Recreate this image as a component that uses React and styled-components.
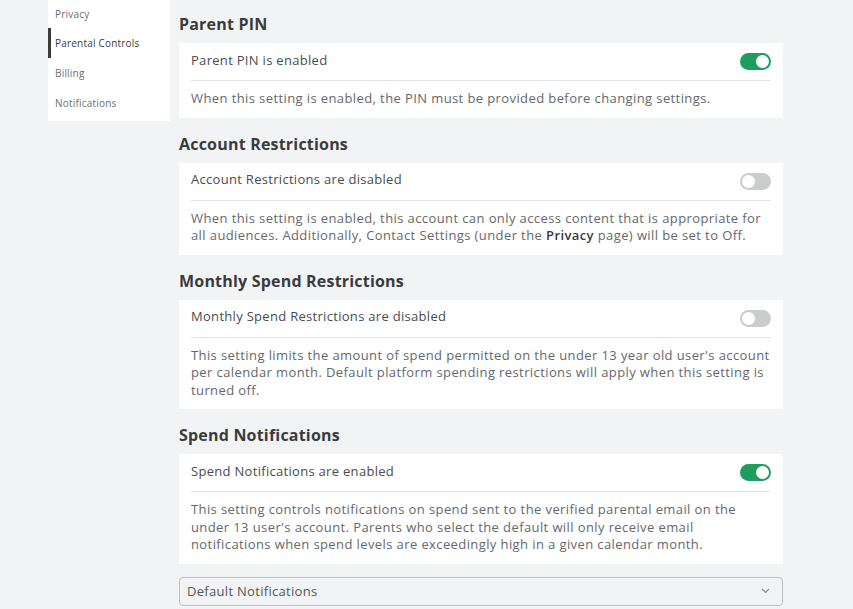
import React, { useState } from "react";
import styled, { createGlobalStyle } from "styled-components";

const GlobalStyle = createGlobalStyle`
    body {
        margin: 0;
        background: #f2f3f5;
        font-family: "Open Sans", "Liberation Sans", sans-serif;
    }
`;

const Page = styled.div`
    display: flex;
    align-items: flex-start;
    gap: 9px;
    padding-left: 48px;
    width: 735px;
`;

const Sidebar = styled.ul`
    list-style: none;
    margin: 0;
    padding: 0 0 3px;
    width: 122px;
    flex-shrink: 0;
    background: #ffffff;
    display: flex;
    flex-direction: column;
`;

const NavItem = styled.li`
    height: 30px;
    display: flex;
    align-items: center;
    padding-left: 4px;
    font-size: 10px;
    letter-spacing: 0.2px;
    color: ${(p) => (p.$active ? "#393b3d" : "#6b6d70")};
    border-left: 3px solid ${(p) => (p.$active ? "#393b3d" : "transparent")};
    &:first-child { height: 28px; }
`;

const Main = styled.div`
    width: 604px;
    display: flex;
    flex-direction: column;
    padding-top: 13px;
`;

const Section = styled.section`
    margin-bottom: 15px;
`;

const Title = styled.h2`
    margin: 0 0 8px;
    font-size: 16px;
    line-height: 22px;
    font-weight: 700;
    letter-spacing: 0.2px;
    color: #393b3d;
`;

const Card = styled.div`
    background: #ffffff;
    padding: 0 12px;
`;

const Row = styled.div`
    display: flex;
    align-items: center;
    justify-content: space-between;
    height: 33px;
    padding-bottom: 4px;
    border-bottom: 1px solid #e3e4e6;
    font-size: 13px;
    letter-spacing: 0.3px;
    color: #4a4c4e;
`;

const Desc = styled.p`
    margin: 0;
    padding: 9px 0 10px;
    font-size: 13px;
    line-height: 17.5px;
    letter-spacing: 0.4px;
    color: #66686b;
    b {
        font-weight: 600;
        color: #393b3d;
    }
`;

const Switch = styled.button`
    position: relative;
    width: 31px;
    height: 17px;
    border-radius: 9px;
    border: none;
    padding: 0;
    margin-top: 4px;
    cursor: pointer;
    background: ${(p) => (p.$on ? "#1f9d5f" : "#cbcccd")};
    &::after {
        content: "";
        position: absolute;
        top: 2px;
        left: ${(p) => (p.$on ? "16px" : "2px")};
        width: 13px;
        height: 13px;
        border-radius: 50%;
        background: #ffffff;
    }
`;

const Select = styled.div`
    display: flex;
    align-items: center;
    justify-content: space-between;
    height: 27px;
    margin-top: -2px;
    padding: 0 12px 0 7px;
    border: 1px solid #bfc0c2;
    border-radius: 4px;
    background: #f2f3f5;
    font-size: 13px;
    letter-spacing: 0.3px;
    color: #55575a;
`;

const sections = [
    {
        title: "Parent PIN",
        label: "Parent PIN is enabled",
        on: true,
        desc: "When this setting is enabled, the PIN must be provided before changing settings.",
    },
    {
        title: "Account Restrictions",
        label: "Account Restrictions are disabled",
        on: false,
        desc: (
            <>
                When this setting is enabled, this account can only access content that is appropriate for
                all audiences. Additionally, Contact Settings (under the <b>Privacy</b> page) will be set to Off.
            </>
        ),
    },
    {
        title: "Monthly Spend Restrictions",
        label: "Monthly Spend Restrictions are disabled",
        on: false,
        desc: "This setting limits the amount of spend permitted on the under 13 year old user's account per calendar month. Default platform spending restrictions will apply when this setting is turned off.",
    },
    {
        title: "Spend Notifications",
        label: "Spend Notifications are enabled",
        on: true,
        desc: "This setting controls notifications on spend sent to the verified parental email on the under 13 user's account. Parents who select the default will only receive email notifications when spend levels are exceedingly high in a given calendar month.",
    },
];

export default function App() {
    const [toggles, setToggles] = useState(sections.map((s) => s.on));

    const flip = (i) => {
        setToggles(toggles.map((v, j) => (j === i ? !v : v)));
    };

    return (
        <>
            <GlobalStyle />
            <Page>
                <Sidebar>
                    <NavItem>Privacy</NavItem>
                    <NavItem $active>Parental Controls</NavItem>
                    <NavItem>Billing</NavItem>
                    <NavItem>Notifications</NavItem>
                </Sidebar>
                <Main>
                    {sections.map((s, i) => (
                        <Section key={s.title}>
                            <Title>{s.title}</Title>
                            <Card>
                                <Row>
                                    {s.label}
                                    <Switch $on={toggles[i]} onClick={() => flip(i)} aria-label={s.label} />
                                </Row>
                                <Desc>{s.desc}</Desc>
                            </Card>
                        </Section>
                    ))}
                    <Select>
                        Default Notifications
                        <svg width="9" height="6" viewBox="0 0 9 6" fill="none">
                            <path d="M1 1l3.5 3.5L8 1" stroke="#8a8c8f" strokeWidth="1.2" />
                        </svg>
                    </Select>
                </Main>
            </Page>
        </>
    );
}
